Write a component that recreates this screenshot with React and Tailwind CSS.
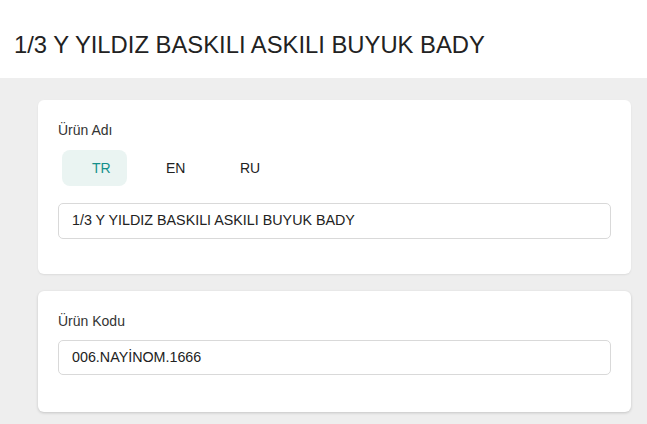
const tabs = ['TR', 'EN', 'RU']

export default function App() {
  return (
    <div className="min-h-[424px] bg-[#eeeeee] font-['Liberation_Sans',Arial,sans-serif] text-[#222]">
      {/* Header */}
      <div className="h-[78px] bg-white pl-[14px] pt-[31px]">
        <h1 className="text-[23.8px] leading-[28px] font-normal text-[#222]">
          1/3 Y YILDIZ BASKILI ASKILI BUYUK BADY
        </h1>
      </div>

      {/* Content */}
      <div className="flex flex-col gap-[17px] pl-[38px] pr-[16px] pt-[22px] pb-3">
        {/* Ürün Adı */}
        <div className="rounded-[6px] bg-white px-5 pt-5 pb-[35px] shadow-[0_1px_2px_rgba(0,0,0,0.08)]">
          <p className="text-[14px] leading-5 text-[#333]">Ürün Adı</p>
          <div className="mt-[10px] ml-[4px] flex gap-[9px]">
            {tabs.map((t, i) => (
              <div
                key={t}
                className={`flex h-[36px] w-[65px] items-center rounded-[8px] pl-[30px] text-[14px] ${
                  i === 0 ? 'bg-[#eaf4f2] text-[#15908b]' : 'text-[#222]'
                }`}
              >
                {t}
              </div>
            ))}
          </div>
          <div className="mt-[17px] flex h-[36px] items-center rounded-[5px] border border-[#d9d9d9] px-[13px] text-[14.3px] text-[#222]">
            1/3 Y YILDIZ BASKILI ASKILI BUYUK BADY
          </div>
        </div>

        {/* Ürün Kodu */}
        <div className="rounded-[6px] bg-white px-5 pt-5 pb-[37px] shadow-[0_1px_3px_rgba(0,0,0,0.18)]">
          <p className="text-[14px] leading-5 text-[#333]">Ürün Kodu</p>
          <div className="mt-[9px] flex h-[35px] items-center rounded-[5px] border border-[#d9d9d9] px-[13px] text-[14.3px] text-[#222]">
            006.NAYİNOM.1666
          </div>
        </div>
      </div>
    </div>
  )
}
